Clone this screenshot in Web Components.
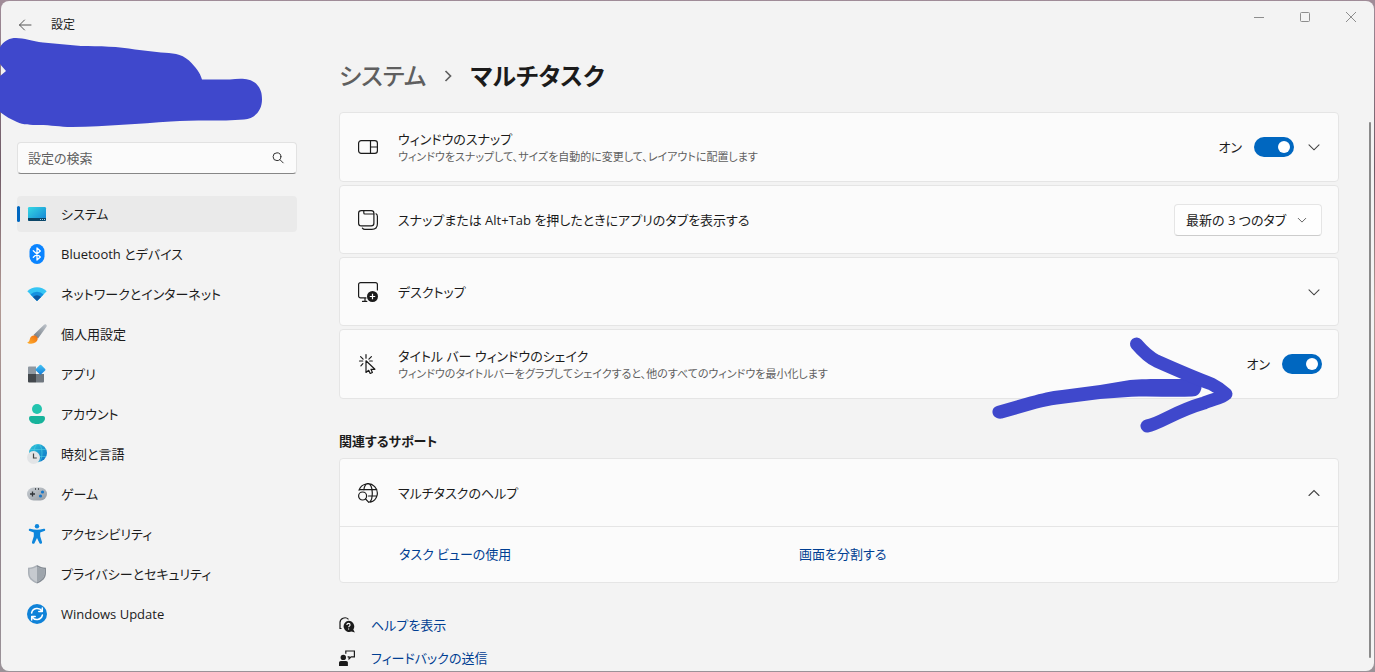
<!DOCTYPE html>
<html lang="ja">
<head>
<meta charset="utf-8">
<title>設定</title>
<style>
  html, body { height: 100%; margin: 0; }
  body {
    box-sizing: border-box;
    padding: 1px;
    overflow: hidden;
    background: linear-gradient(180deg, #a08c98 0%, #6f5a66 25%, #b29a94 45%, #8f8088 75%, #9a9298 100%);
    color: #1b1b1b;
    font: 13px/20px "Open Sans", "Noto Sans CJK JP", sans-serif;
    font-feature-settings: "palt", "kern";
  }
</style>
</head>
<body>

<settings-window heading="設定">
  <nav-pane slot="nav">
    <nav-item icon="system" active>システム</nav-item>
    <nav-item icon="bluetooth">Bluetooth とデバイス</nav-item>
    <nav-item icon="network">ネットワークとインターネット</nav-item>
    <nav-item icon="brush">個人用設定</nav-item>
    <nav-item icon="apps">アプリ</nav-item>
    <nav-item icon="account">アカウント</nav-item>
    <nav-item icon="time">時刻と言語</nav-item>
    <nav-item icon="game">ゲーム</nav-item>
    <nav-item icon="access">アクセシビリティ</nav-item>
    <nav-item icon="shield">プライバシーとセキュリティ</nav-item>
    <nav-item icon="update">Windows Update</nav-item>
  </nav-pane>

  <bread-crumb parent="システム" current="マルチタスク"></bread-crumb>

  <card-stack>
    <setting-card icon="snap" heading="ウィンドウのスナップ" detail="ウィンドウをスナップして、サイズを自動的に変更して、レイアウトに配置します">
      <toggle-switch label="ウィンドウのスナップ"></toggle-switch>
      <chevron-button label="展開"></chevron-button>
    </setting-card>
    <setting-card icon="tabs" heading="スナップまたは Alt+Tab を押したときにアプリのタブを表示する">
      <combo-box label="タブの表示" options="最新の 3 つのタブ"></combo-box>
    </setting-card>
    <setting-card icon="desktop" heading="デスクトップ">
      <chevron-button label="展開"></chevron-button>
    </setting-card>
    <setting-card icon="shake" heading="タイトル バー ウィンドウのシェイク" detail="ウィンドウのタイトルバーをグラブしてシェイクすると、他のすべてのウィンドウを最小化します">
      <toggle-switch label="タイトル バー ウィンドウのシェイク"></toggle-switch>
    </setting-card>
  </card-stack>

  <section-title>関連するサポート</section-title>
  <setting-card icon="webhelp" heading="マルチタスクのヘルプ" expanded>
    <chevron-button label="折りたたむ" up></chevron-button>
    <text-link slot="body">タスク ビューの使用</text-link>
    <text-link slot="body">画面を分割する</text-link>
  </setting-card>

  <footer-links>
    <text-link icon="gethelp">ヘルプを表示</text-link>
    <text-link icon="feedback">フィードバックの送信</text-link>
  </footer-links>
</settings-window>

<ink-layer></ink-layer>

<script>
// viewBox size + markup for every icon
const ICONS = {
  back: [16, '<path d="M14 8H2.500M7.500 3L2.500 8l5 5" fill="none" stroke="#555" stroke-linecap="round"/>'],
  search: [16, '<g fill="none" stroke="#333" stroke-linecap="round"><circle cx="7" cy="6.700" r="3.900"/><path d="M9.900 9.600l3.300 3.300"/></g>'],
  min: [10, '<path d="M0 5.500h10" stroke="#8d8d8d"/>'],
  max: [10, '<rect x=".5" y=".5" width="9" height="9" rx="1" fill="none" stroke="#8d8d8d"/>'],
  close: [10, '<path d="M0 0l10 10M10 0L0 10" stroke="#8d8d8d"/>'],
  down: [16, '<path d="M3 5.800l5 5 5-5" fill="none" stroke="#444" stroke-width="1.100" stroke-linecap="round"/>'],
  up: [16, '<path d="M3 10.500l5-5 5 5" fill="none" stroke="#444" stroke-width="1.100" stroke-linecap="round"/>'],
  system: [20, `<defs><linearGradient id="g" x1="0" y1="0" x2="1" y2="1"><stop stop-color="#35d8e4"/><stop offset="1" stop-color="#1381d4"/></linearGradient></defs>
    <rect x="1" y="3" width="18" height="14" rx="1.200" fill="url(#g)"/><path d="M1 14h18v1.800a1.200 1.200 0 0 1-1.200 1.200H2.200A1.200 1.200 0 0 1 1 15.800z" fill="#0b4668"/><path d="M13 15.500h1m1 0h1m1 0h1" stroke="#9fd0e8"/>`],
  bluetooth: [20, '<rect x="2.500" width="15" height="20" rx="7.500" fill="#0a84ff"/><path d="M6.300 6.700l7 6.300L10 16V4l3.300 3-7 6.300" fill="none" stroke="#fff" stroke-width="1.300" stroke-linejoin="round" stroke-linecap="round"/>'],
  network: [20, '<path d="M10 17L.3 7.300a13.800 13.800 0 0 1 19.400 0z" fill="#35c5f4"/><path d="M10 17L3.400 10.400a9.400 9.400 0 0 1 13.200 0z" fill="#1490df"/><path d="M10 17l-4-4a5.700 5.700 0 0 1 8 0z" fill="#0c59a4"/>'],
  brush: [20, `<defs><linearGradient id="g" x1="1" y1="0" x2="0" y2="1"><stop stop-color="#c0c6cd"/><stop offset="1" stop-color="#6d767f"/></linearGradient><linearGradient id="h" x1="0" y1="1" x2="1" y2="0"><stop stop-color="#ffb02e"/><stop offset="1" stop-color="#ee6b0e"/></linearGradient></defs>
    <path d="M19.300.7c.7.600.6 1.500 0 2.400L11 14.500 6.500 11 16.800.9c.8-.7 1.800-.8 2.500-.2z" fill="url(#g)"/><path d="M6.600 11.500c2-.6 4.600 1.500 4 3.900-.8 3-4.600 4.400-8 4.300-1.200 0-2-.7-2.300-1.400 2.500-.4 2-2 2.900-4.300.6-1.500 1.900-2.200 3.400-2.500z" fill="url(#h)"/>`],
  apps: [20, `<defs><linearGradient id="g" x1="0" y1="0" x2="1" y2="1"><stop stop-color="#45c6f5"/><stop offset="1" stop-color="#127ad8"/></linearGradient></defs>
    <path d="M1 3.500A1 1 0 0 1 2 2.500h7V10H1z" fill="#8f98a1"/><path d="M1 10h8v8.500H2a1 1 0 0 1-1-1z" fill="#43484d"/><path d="M9 10h8v7.500a1 1 0 0 1-1 1H9z" fill="#6f777f"/><rect x="9.700" y="1.900" width="7.600" height="7.600" rx="1" transform="rotate(45 13.500 5.700)" fill="url(#g)"/>`],
  account: [20, '<circle cx="10" cy="5" r="5" fill="#23c4ae"/><path d="M4 12h12a2 2 0 0 1 2 2c0 3.900-3.300 6-8 6s-8-2.100-8-6a2 2 0 0 1 2-2z" fill="#17b39b"/>'],
  time: [20, `<defs><linearGradient id="g" x1="0" y1="0" x2="1" y2="1"><stop stop-color="#31c9d8"/><stop offset="1" stop-color="#0b6fc7"/></linearGradient></defs>
    <circle cx="11" cy="9" r="9" fill="url(#g)"/><g fill="none" stroke="#4fd0e6" stroke-width=".6"><ellipse cx="11" cy="9" rx="4" ry="9"/><path d="M3 5.500h16M3 12.500h16"/></g><circle cx="6.500" cy="13.500" r="6.500" fill="#e2e4e6"/><path d="M6.500 9.500v4.500h3.300" fill="none" stroke="#444" stroke-width="1.200"/>`],
  game: [20, `<defs><linearGradient id="g" x1="0" y1="0" x2="1" y2="1"><stop stop-color="#c9ced3"/><stop offset="1" stop-color="#9299a1"/></linearGradient></defs>
    <rect y="3.500" width="20" height="13" rx="6.500" fill="url(#g)"/><path d="M3 10h5M5.500 7.500v5M8 5h1m2 0h1" stroke="#303438" stroke-width="1.300"/><circle cx="15.500" cy="8" r="1.600" fill="#1677c9"/><circle cx="13.500" cy="12" r="1.600" fill="#1677c9"/>`],
  access: [20, '<g fill="#0d86dc"><circle cx="10" cy="2.200" r="2.200"/><path d="M3.300 4.800c2.300.5 4.300.9 6.700.9s4.400-.4 6.700-.9c1.800-.2 2 1.900.6 2.300l-4.100 1.400v3.800l1.800 5.800c.4 1.800-1.900 2.500-2.600.8L10 13.900l-2.400 5c-.7 1.700-3 1-2.600-.8l1.800-5.800V8.500L2.700 7.100c-1.400-.4-1.200-2.500.6-2.300z"/></g>'],
  shield: [20, '<path d="M10 1c2.500 1.700 5.500 2.600 9 2.700V9c0 5-3.500 8.500-9 10.500z" fill="#858c94"/><path d="M10 1C7.500 2.700 4.500 3.600 1 3.700V9c0 5 3.500 8.500 9 10.500z" fill="#aab0b7"/><path d="M10 2.700c2.200 1.300 4.600 2 7.500 2.200V9c0 4.200-2.800 7-7.500 8.900C5.300 16 2.500 13.200 2.500 9V4.900c2.900-.2 5.300-.9 7.500-2.200z" fill="#c6cacf"/><path d="M10 2.700c2.200 1.300 4.600 2 7.500 2.200V9c0 4.200-2.800 7-7.500 8.900z" fill="#9ea5ac"/>'],
  update: [20, '<circle cx="10" cy="10" r="10" fill="#0f82d8"/><g fill="none" stroke="#fff" stroke-width="1.500" stroke-linecap="round" stroke-linejoin="round"><path d="M4.600 9A5.700 5.700 0 0 1 15 7.200M15.300 4v3.500h-3.500M15.400 11A5.700 5.700 0 0 1 5 12.800M4.700 16v-3.500h3.500"/></g>'],
  snap: [20, '<g fill="none" stroke="#1b1b1b" stroke-width="1.200"><rect x=".6" y="3.600" width="18.800" height="12.800" rx="2.600"/><path d="M12.500 3.600v12.800M12.500 10h6.900"/></g>'],
  tabs: [20, '<g fill="none" stroke="#1b1b1b" stroke-width="1.200" stroke-linecap="round"><rect x=".6" y=".6" width="15.300" height="15.300" rx="2.700"/><path d="M5.800.8V3a1 1 0 0 0 1 1h9M18 3.800c1 .6 1.400 1.400 1.400 2.600v7.400c0 3.600-2 5.600-5.600 5.600H7c-1.200 0-2-.4-2.600-1.300"/></g>'],
  desktop: [20, '<g fill="none" stroke="#1b1b1b" stroke-width="1.200" stroke-linecap="round"><path d="M8 15.900H2.600a2 2 0 0 1-2-2V2.600a2 2 0 0 1 2-2h14.800a2 2 0 0 1 2 2V8M7 16v3.400M4.500 19.400h4.300"/></g><circle cx="14.500" cy="14.500" r="5.500" fill="#1b1b1b"/><path d="M14.500 11.800v5.400M11.800 14.500h5.400" stroke="#fff" stroke-width="1.200"/>'],
  shake: [20, '<g fill="none" stroke="#1b1b1b" stroke-width="1.200" stroke-linecap="round" stroke-linejoin="round"><path d="M8 .6v3.600M2.600 2.600l2.500 2.500M13.400 2.600l-2.500 2.500M1.500 7h3.200M4.900 9.700l-2 2.100M11.700 7h2.600"/><path d="M8 6.800v11.700l2.700-2.200 1.500 3.200 2.200-1-1.400-3.200h3.900z"/></g>'],
  webhelp: [20, '<g fill="none" stroke="#1b1b1b" stroke-width="1.200" stroke-linecap="round"><path d="M1 7.200a9.400 9.400 0 1 1 11.500 12M1.300 6.700h17.500M10.500 13h8.300M5.800 7C6.300 3.200 8 .6 10 .6c2.500 0 4.300 4.200 4.300 9.400 0 4.300-1 7.800-2.600 9"/><circle cx="4.600" cy="13" r="4"/><path d="M7.600 16l3.200 3.300"/></g>'],
  gethelp: [16, '<path d="M1 10.500V6a4.900 4.900 0 0 1 8.500-3.600M1 7.500v4h1.500" fill="none" stroke="#1b1b1b" stroke-width="1.200"/><path d="M9.500 3.700a5.700 5.700 0 0 1 4.800 8.800l1.600 3-3.400-.9A5.700 5.700 0 1 1 9.500 3.700z" fill="#1b1b1b"/><path d="M7.900 7.900c0-2 3.200-2 3.200 0 0 1.200-1.500 1.200-1.500 2.400M9.600 11.400v1.200" fill="none" stroke="#fff" stroke-width="1.100"/>'],
  feedback: [16, '<circle cx="4.300" cy="7.400" r="2.700" fill="#1b1b1b"/><path d="M0 16v-3.200c0-1 .7-1.800 1.800-1.800h5.300c1.100 0 1.800.8 1.800 1.800V16z" fill="#1b1b1b"/><path d="M6.800 3.700V1h8.600v5.800h-3.300l-2 2V6.800H8.600" fill="none" stroke="#1b1b1b" stroke-width="1.200"/>']
};

const svg = (name, size) => {
  const [box, markup] = ICONS[name];
  return `<svg width="${size || box}" height="${size || box}" viewBox="0 0 ${box} ${box}" aria-hidden="true">${markup}</svg>`;
};

// Registers an element whose shadow root is cloned from a template
const define = (tag, render) => {
  customElements.define(tag, class extends HTMLElement {
    constructor () {
      super();
      const template = document.createElement('template');
      template.innerHTML = `<style>svg { display: block; flex: none; }</style>` + render(this);
      this.attachShadow({ mode: 'open' }).appendChild(template.content.cloneNode(true));
    }
  });
};

define('settings-window', el => `
<style>
  :host {
    display: flex; flex-direction: column; height: 100%;
    background: #f3f3f3; border-radius: 8px; overflow: hidden;
  }
  header { display: flex; flex: none; justify-content: space-between; height: 48px; }
  .title { display: flex; align-items: center; gap: 18px; padding-left: 16px; font-size: 12px; }
  button { display: grid; place-items: center; padding: 0; border: 0; background: none; }
  .title button { width: 16px; height: 16px; }
  .controls { display: flex; height: 32px; }
  .controls button { width: 46px; }
  .body { display: flex; flex: 1; min-height: 0; }
  main { flex: 1; min-width: 0; margin: 0 30px 0 42px; overflow: hidden; }
  .bar { flex: none; width: 2px; margin: 73px 3px 13px 0; border-radius: 1px; background: #8a8a8a; }
</style>
<header>
  <div class="title"><button aria-label="戻る">${svg('back')}</button><span>${el.getAttribute('heading')}</span></div>
  <div class="controls">
    <button aria-label="最小化">${svg('min')}</button>
    <button aria-label="最大化">${svg('max')}</button>
    <button aria-label="閉じる">${svg('close')}</button>
  </div>
</header>
<div class="body">
  <slot name="nav"></slot>
  <main><slot></slot></main>
  <div class="bar"></div>
</div>
`);

define('nav-pane', () => `
<style>
  :host { display: block; flex: none; width: 280px; padding: 93px 0 0 16px; }
  form {
    display: flex; align-items: center; box-sizing: border-box; height: 32px; padding: 0 10px;
    background: #fbfbfb; border: 1px solid #e2e2e2; border-bottom-color: #868686; border-radius: 4px;
  }
  input {
    flex: 1; min-width: 0; padding: 0; border: 0; outline: 0; background: none;
    font: inherit; font-feature-settings: inherit;
  }
  input::placeholder { color: #5f5f5f; opacity: 1; }
  button { padding: 0; border: 0; background: none; }
  nav { display: flex; flex-direction: column; gap: 4px; margin-top: 22px; }
</style>
<form role="search">
  <input type="text" placeholder="設定の検索" aria-label="設定の検索">
  <button type="button" aria-label="検索">${svg('search')}</button>
</form>
<nav><slot></slot></nav>
`);

define('nav-item', el => `
<style>
  :host { display: block; }
  a {
    display: flex; align-items: center; gap: 14px; height: 36px; padding: 0 10px;
    border-radius: 4px; color: inherit; text-decoration: none;
  }
  :host([active]) a { position: relative; background: #eaeaea; }
  :host([active]) a::before {
    content: ""; position: absolute; left: 0; top: 10px;
    width: 3px; height: 16px; border-radius: 2px; background: #0067c0;
  }
</style>
<a href="#">${svg(el.getAttribute('icon'))}<span><slot></slot></span></a>
`);

define('bread-crumb', el => `
<style>
  :host { display: block; padding: 9px 0 18px; }
  h1 { display: flex; align-items: center; gap: 15px; margin: 0; font-size: 24px; line-height: 36px; font-weight: 700; }
  a { color: #5f5f5f; font-weight: 500; text-decoration: none; }
</style>
<h1>
  <a href="#">${el.getAttribute('parent')}</a>
  <svg width="14" height="14" viewBox="0 0 14 14" aria-hidden="true"><path d="M4.500 2l5 5-5 5" fill="none" stroke="#5f5f5f" stroke-width="1.700"/></svg>
  <span>${el.getAttribute('current')}</span>
</h1>
`);

define('card-stack', () => `
<style>:host { display: flex; flex-direction: column; gap: 3px; }</style>
<slot></slot>
`);

define('setting-card', el => `
<style>
  :host { display: block; background: #fbfbfb; border: 1px solid #e5e5e5; border-radius: 4px; }
  .row { display: flex; align-items: center; gap: 20px; box-sizing: border-box; min-height: 67px; padding: 16px 16px 16px 18px; }
  .text { flex: 1; min-width: 0; }
  .detail { color: #5f5f5f; font-size: 11px; line-height: 16px; }
  .control { display: flex; align-items: center; gap: 12px; margin: -8px 0; }
  .body { display: grid; grid-template-columns: repeat(auto-fill, 400px); padding: 17px 16px 18px 59px; border-top: 1px solid #e5e5e5; }
</style>
<div class="row">
  ${svg(el.getAttribute('icon'))}
  <div class="text">
    <div>${el.getAttribute('heading')}</div>
    ${el.hasAttribute('detail') ? `<div class="detail">${el.getAttribute('detail')}</div>` : ''}
  </div>
  <div class="control"><slot></slot></div>
</div>
${el.hasAttribute('expanded') ? '<div class="body"><slot name="body"></slot></div>' : ''}
`);

define('toggle-switch', el => `
<style>
  :host { display: block; }
  label { display: flex; align-items: center; gap: 12px; }
  input {
    appearance: none; box-sizing: border-box; width: 40px; height: 20px; margin: 0; padding: 4px;
    border-radius: 10px; background: #0067c0;
  }
  input::before {
    content: ""; display: block; width: 12px; height: 12px; margin-left: 20px;
    border-radius: 50%; background: #fff;
  }
</style>
<label><span>オン</span><input type="checkbox" role="switch" aria-label="${el.getAttribute('label')}" checked></label>
`);

define('chevron-button', el => `
<style>
  :host { display: block; }
  button { display: block; padding: 0; border: 0; background: none; }
</style>
<button aria-label="${el.getAttribute('label')}">${svg(el.hasAttribute('up') ? 'up' : 'down')}</button>
`);

define('combo-box', el => `
<style>
  :host { display: grid; align-items: center; width: 148px; }
  select, svg { grid-area: 1 / 1; }
  select {
    appearance: none; width: 100%; height: 32px; padding: 0 32px 0 11px;
    border: 1px solid #e5e5e5; border-bottom-color: #ccc; border-radius: 4px; background: #fefefe;
    color: inherit; font: inherit; font-feature-settings: inherit;
  }
  svg { justify-self: end; margin-right: 14px; pointer-events: none; }
</style>
<select aria-label="${el.getAttribute('label')}">
  ${el.getAttribute('options').split('|').map(o => `<option>${o}</option>`).join('')}
</select>
${svg('down', 12)}
`);

define('section-title', () => `
<style>
  :host { display: block; padding: 32px 0 7px; }
  h2 { margin: 0; font-size: 13px; line-height: 20px; font-weight: 700; }
</style>
<h2><slot></slot></h2>
`);

define('text-link', el => `
<style>
  :host { display: block; }
  a { display: flex; align-items: center; gap: 16px; width: fit-content; color: #003e92; text-decoration: none; }
</style>
<a href="#">${el.hasAttribute('icon') ? svg(el.getAttribute('icon')) : ''}<span><slot></slot></span></a>
`);

define('footer-links', () => `
<style>:host { display: flex; flex-direction: column; gap: 13px; padding-top: 32px; }</style>
<slot></slot>
`);

// Hand-drawn marks that lie over the window
define('ink-layer', () => `
<style>
  :host { position: absolute; inset: 0; overflow: hidden; pointer-events: none; }
  svg { overflow: visible; }
</style>
<svg width="1" height="1" aria-hidden="true">
  <path fill="#3f48cc" d="M0 47C4 41 9 38 16 38c8 0 16 3 27 4.500L81 46c18 0 38 .5 54 3.500l26 3c11 .5 20 1 28 8 7 7 11 12 13 19h28c9-1 19-2 26 4 5 5 6 10 6 16 0 11-7 19-18 20-23 2-50 0-73 2-32 2-64 5-99 5.500-13 0-20-2-33-2-8 0-16 0-22-3C10 119 5 116 0 112V76l6-5-6-7z"/>
  <path fill="#3f48cc" d="M997 406l33-9.500c12-3 20-5.500 32-6.500l38-5 30-5c16-1.500 40-1 58-1 8 0 14 4 13.500 9-1 5-4 8.500-9.500 8.500-20 .7-40-.5-60.500.2L1100 399l-43 5.500c-7 1-13 2.200-20 4l-35 10c-10 1.500-13-10-5-12.500z"/>
  <path fill="none" stroke="#3f48cc" stroke-linecap="round" stroke-linejoin="round" stroke-width="13" d="M1136.500 344c6 7 12 13 20 17 18 8 36 16 55 23 6 3 10 6 14.500 10-4 4-14 5.500-22 9-14 4-25 9-37 15-8 4-14 7-20 8"/>
</svg>
`);
</script>
</body>
</html>
